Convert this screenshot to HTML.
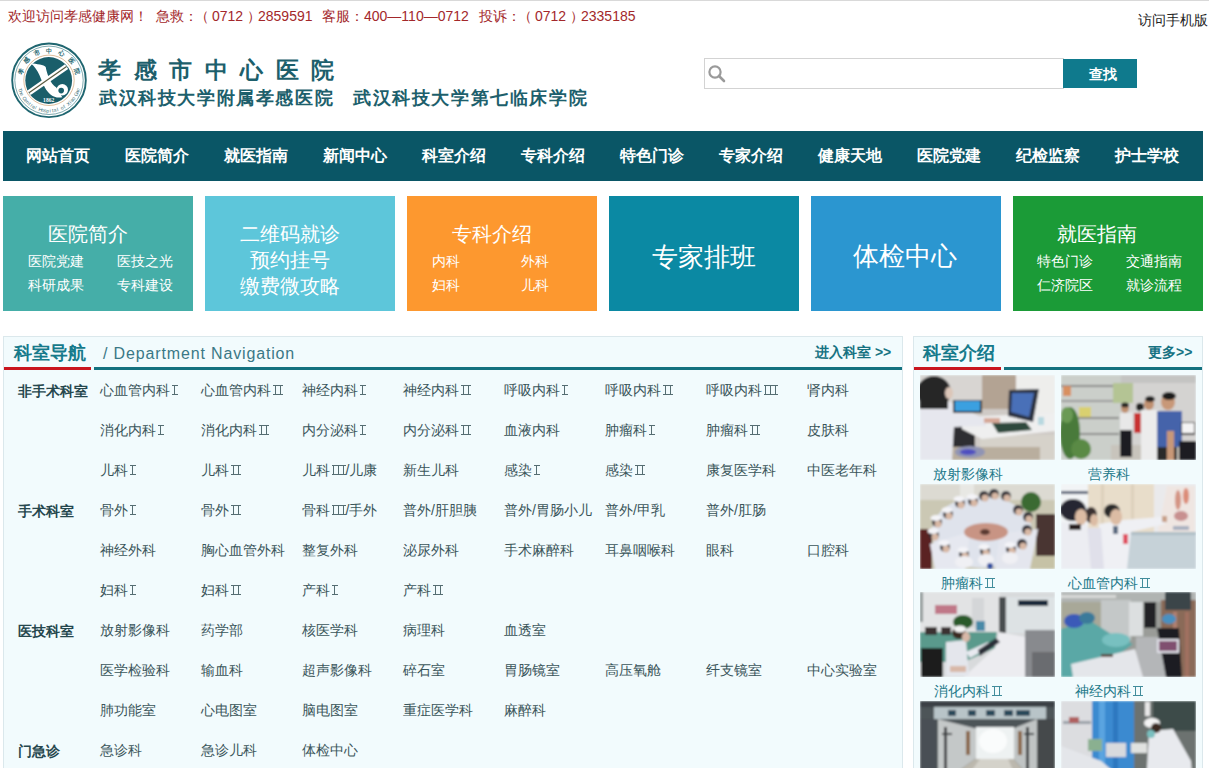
<!DOCTYPE html><html><head><meta charset="utf-8"><title>孝感市中心医院</title><style>
*{margin:0;padding:0;box-sizing:border-box}
html,body{width:1209px;height:768px;overflow:hidden;background:#fff}
body{font-family:"Liberation Sans",sans-serif;position:relative}
.a{position:absolute;white-space:nowrap}
#topline{left:0;top:0;width:1209px;height:1px;background:#d9d9d9}
.tt{top:9px;font-size:14px;line-height:14px;color:#a3282b}
#mobile{left:1138px;top:13px;font-size:14px;line-height:14px;color:#222}
#search{left:704px;top:58px;width:360px;height:31px;border:1px solid #d3d3d3;background:#fff}
#btn{left:1063px;top:59px;width:74px;height:29px;background:#0f7a8d}
#btnt{left:1089px;top:67px;font-size:14px;line-height:14px;font-weight:bold;color:#fff}
#nav{left:3px;top:131px;width:1200px;height:50px;background:#0a5666}
.ni{top:148px;font-size:16px;line-height:16px;font-weight:bold;color:#fff}
.tile{top:196px;width:190px;height:115px}
.tb{font-size:20px;line-height:20px;color:#fff}
.ts{font-size:14px;line-height:14px;color:#fff}
.tx{font-size:26px;line-height:26px;color:#fff}
#lp{left:3px;top:336px;width:900px;height:440px;background:#f2fbfd;border:1px solid #dbe8ec}
#rp{left:913px;top:336px;width:290px;height:440px;background:#f2fbfd;border:1px solid #dbe8ec}
.ph{font-size:18px;line-height:18px;font-weight:bold;color:#167a8b}
.red{height:3px;background:#c9151e}
.teal{height:3px;background:#13717f}
.more{font-size:14px;line-height:14px;font-weight:bold;color:#167282}
.cat{font-size:14px;line-height:14px;font-weight:bold;color:#26474e}
.it{font-size:14px;line-height:14px;color:#3a555a}
.lbl{font-size:14px;line-height:14px;color:#23798a}
.pic{overflow:hidden}
.r{display:inline-block;vertical-align:baseline;height:10px;border-top:1px solid currentColor;border-bottom:1px solid currentColor;margin-left:1.5px;opacity:.85;position:relative;top:0px}
</style></head><body>
<div class="a" id="topline"></div>
<div class="a tt" style="left:8px">欢迎访问孝感健康网！</div>
<div class="a tt" style="left:156px">急救：</div>
<div class="a tt" style="left:195px">（</div>
<div class="a tt" style="left:212px">0712</div>
<div class="a tt" style="left:247px">）</div>
<div class="a tt" style="left:258px">2859591</div>
<div class="a tt" style="left:322px">客服：</div>
<div class="a tt" style="left:364px">400—110—0712</div>
<div class="a tt" style="left:479px">投诉：</div>
<div class="a tt" style="left:518px">（</div>
<div class="a tt" style="left:535px">0712</div>
<div class="a tt" style="left:570px">）</div>
<div class="a tt" style="left:581px">2335185</div>
<div class="a" id="mobile">访问手机版</div>
<svg class="a" style="left:5px;top:38px" width="88" height="84" viewBox="0 0 88 84">
<circle cx="44" cy="42.3" r="36.8" fill="#fff" stroke="#1f6670" stroke-width="1.9"/>
<circle cx="44" cy="42.3" r="34.2" fill="none" stroke="#2a7078" stroke-width="0.6"/>
<text x="15.28" y="32.97" font-size="6.2" font-weight="bold" fill="#2a6a72" text-anchor="middle" dominant-baseline="central" transform="rotate(-72.0 15.28 32.97)">孝</text><text x="21.56" y="22.09" font-size="6.2" font-weight="bold" fill="#2a6a72" text-anchor="middle" dominant-baseline="central" transform="rotate(-48.0 21.56 22.09)">感</text><text x="31.72" y="14.71" font-size="6.2" font-weight="bold" fill="#2a6a72" text-anchor="middle" dominant-baseline="central" transform="rotate(-24.0 31.72 14.71)">市</text><text x="44.00" y="12.10" font-size="6.2" font-weight="bold" fill="#2a6a72" text-anchor="middle" dominant-baseline="central" transform="rotate(0.0 44.00 12.10)">中</text><text x="56.28" y="14.71" font-size="6.2" font-weight="bold" fill="#2a6a72" text-anchor="middle" dominant-baseline="central" transform="rotate(24.0 56.28 14.71)">心</text><text x="66.44" y="22.09" font-size="6.2" font-weight="bold" fill="#2a6a72" text-anchor="middle" dominant-baseline="central" transform="rotate(48.0 66.44 22.09)">医</text><text x="72.72" y="32.97" font-size="6.2" font-weight="bold" fill="#2a6a72" text-anchor="middle" dominant-baseline="central" transform="rotate(72.0 72.72 32.97)">院</text><text x="15.28" y="51.63" font-size="5" fill="#3a7078" text-anchor="middle" dominant-baseline="central" transform="rotate(72.0 15.28 51.63)">T</text><text x="16.13" y="53.93" font-size="5" fill="#3a7078" text-anchor="middle" dominant-baseline="central" transform="rotate(67.4 16.13 53.93)">h</text><text x="17.16" y="56.15" font-size="5" fill="#3a7078" text-anchor="middle" dominant-baseline="central" transform="rotate(62.7 17.16 56.15)">e</text><text x="19.75" y="60.30" font-size="5" fill="#3a7078" text-anchor="middle" dominant-baseline="central" transform="rotate(53.4 19.75 60.30)">C</text><text x="21.29" y="62.20" font-size="5" fill="#3a7078" text-anchor="middle" dominant-baseline="central" transform="rotate(48.8 21.29 62.20)">e</text><text x="22.97" y="63.98" font-size="5" fill="#3a7078" text-anchor="middle" dominant-baseline="central" transform="rotate(44.1 22.97 63.98)">n</text><text x="24.80" y="65.61" font-size="5" fill="#3a7078" text-anchor="middle" dominant-baseline="central" transform="rotate(39.5 24.80 65.61)">t</text><text x="26.75" y="67.09" font-size="5" fill="#3a7078" text-anchor="middle" dominant-baseline="central" transform="rotate(34.8 26.75 67.09)">r</text><text x="28.81" y="68.40" font-size="5" fill="#3a7078" text-anchor="middle" dominant-baseline="central" transform="rotate(30.2 28.81 68.40)">a</text><text x="30.98" y="69.55" font-size="5" fill="#3a7078" text-anchor="middle" dominant-baseline="central" transform="rotate(25.5 30.98 69.55)">l</text><text x="35.55" y="71.29" font-size="5" fill="#3a7078" text-anchor="middle" dominant-baseline="central" transform="rotate(16.3 35.55 71.29)">H</text><text x="37.92" y="71.88" font-size="5" fill="#3a7078" text-anchor="middle" dominant-baseline="central" transform="rotate(11.6 37.92 71.88)">o</text><text x="40.34" y="72.28" font-size="5" fill="#3a7078" text-anchor="middle" dominant-baseline="central" transform="rotate(7.0 40.34 72.28)">s</text><text x="42.78" y="72.48" font-size="5" fill="#3a7078" text-anchor="middle" dominant-baseline="central" transform="rotate(2.3 42.78 72.48)">p</text><text x="45.22" y="72.48" font-size="5" fill="#3a7078" text-anchor="middle" dominant-baseline="central" transform="rotate(-2.3 45.22 72.48)">i</text><text x="47.66" y="72.28" font-size="5" fill="#3a7078" text-anchor="middle" dominant-baseline="central" transform="rotate(-7.0 47.66 72.28)">t</text><text x="50.08" y="71.88" font-size="5" fill="#3a7078" text-anchor="middle" dominant-baseline="central" transform="rotate(-11.6 50.08 71.88)">a</text><text x="52.45" y="71.29" font-size="5" fill="#3a7078" text-anchor="middle" dominant-baseline="central" transform="rotate(-16.3 52.45 71.29)">l</text><text x="57.02" y="69.55" font-size="5" fill="#3a7078" text-anchor="middle" dominant-baseline="central" transform="rotate(-25.5 57.02 69.55)">o</text><text x="59.19" y="68.40" font-size="5" fill="#3a7078" text-anchor="middle" dominant-baseline="central" transform="rotate(-30.2 59.19 68.40)">f</text><text x="63.20" y="65.61" font-size="5" fill="#3a7078" text-anchor="middle" dominant-baseline="central" transform="rotate(-39.5 63.20 65.61)">X</text><text x="65.03" y="63.98" font-size="5" fill="#3a7078" text-anchor="middle" dominant-baseline="central" transform="rotate(-44.1 65.03 63.98)">i</text><text x="66.71" y="62.20" font-size="5" fill="#3a7078" text-anchor="middle" dominant-baseline="central" transform="rotate(-48.8 66.71 62.20)">a</text><text x="68.25" y="60.30" font-size="5" fill="#3a7078" text-anchor="middle" dominant-baseline="central" transform="rotate(-53.4 68.25 60.30)">o</text><text x="70.84" y="56.15" font-size="5" fill="#3a7078" text-anchor="middle" dominant-baseline="central" transform="rotate(-62.7 70.84 56.15)">G</text><text x="71.87" y="53.93" font-size="5" fill="#3a7078" text-anchor="middle" dominant-baseline="central" transform="rotate(-67.4 71.87 53.93)">a</text><text x="72.72" y="51.63" font-size="5" fill="#3a7078" text-anchor="middle" dominant-baseline="central" transform="rotate(-72.0 72.72 51.63)">n</text>
<circle cx="44" cy="42.3" r="25.2" fill="none" stroke="#d0a070" stroke-width="0.7"/>
<circle cx="43.7" cy="42.5" r="23.4" fill="#1a5e6a"/>
<path d="M25.6 25.3 C31.6 26.1 39.2 26.8 40.7 29.1 C42.2 36.7 45.2 45.7 51.3 49.5 L57.3 59.3 C49 60.8 43.7 56.3 39.9 49.5 C36.1 42.7 33.9 31.4 25.6 25.3 Z" fill="#fff"/>
<circle cx="57.3" cy="51.8" r="5.7" fill="#fff"/>
<circle cx="56.2" cy="52.6" r="2.8" fill="#1a5e6a"/>
<path d="M60 26.3 L22.4 52.5 L25.6 57.1 L63.2 30.9 Z" fill="#fff"/>
<path d="M61.6 28.6 L24 54.8" stroke="#5a5a40" stroke-width="1.2"/>
<text x="43.7" y="63.5" font-size="5.6" font-family="Liberation Serif" font-weight="bold" fill="#fff" text-anchor="middle">1862</text>
</svg>
<div class="a" style="left:98px;top:59px;font-size:23px;line-height:23px;font-weight:bold;color:#1d5f6c;letter-spacing:12.5px">孝感市中心医院</div>
<div class="a" style="left:99px;top:89px;font-size:18px;line-height:18px;font-weight:bold;color:#1d5f6c;letter-spacing:1.6px">武汉科技大学附属孝感医院</div>
<div class="a" style="left:353px;top:89px;font-size:18px;line-height:18px;font-weight:bold;color:#1d5f6c;letter-spacing:1.6px">武汉科技大学第七临床学院</div>
<div class="a" id="search"></div>
<svg class="a" style="left:706px;top:64px" width="22" height="20" viewBox="0 0 22 20"><circle cx="9" cy="8" r="5.6" fill="none" stroke="#9a9a9a" stroke-width="2.2"/><path d="M13 12 L18 17" stroke="#9a9a9a" stroke-width="2.6" stroke-linecap="round"/></svg>
<div class="a" id="btn"></div><div class="a" id="btnt">查找</div>
<div class="a" id="nav"></div>
<div class="a ni" style="left:26px">网站首页</div>
<div class="a ni" style="left:125px">医院简介</div>
<div class="a ni" style="left:224px">就医指南</div>
<div class="a ni" style="left:323px">新闻中心</div>
<div class="a ni" style="left:422px">科室介绍</div>
<div class="a ni" style="left:521px">专科介绍</div>
<div class="a ni" style="left:620px">特色门诊</div>
<div class="a ni" style="left:719px">专家介绍</div>
<div class="a ni" style="left:818px">健康天地</div>
<div class="a ni" style="left:917px">医院党建</div>
<div class="a ni" style="left:1016px">纪检监察</div>
<div class="a ni" style="left:1115px">护士学校</div>
<div class="a tile" style="left:3px;background:#45aea8"></div>
<div class="a tile" style="left:205px;background:#5dc6da"></div>
<div class="a tile" style="left:407px;background:#fd982f"></div>
<div class="a tile" style="left:609px;background:#0b89a3"></div>
<div class="a tile" style="left:811px;background:#2b96d0"></div>
<div class="a tile" style="left:1013px;background:#1b9b37"></div>
<div class="a tb" style="left:48px;top:224px">医院简介</div>
<div class="a ts" style="left:28px;top:254px">医院党建</div>
<div class="a ts" style="left:117px;top:254px">医技之光</div>
<div class="a ts" style="left:28px;top:278px">科研成果</div>
<div class="a ts" style="left:117px;top:278px">专科建设</div>
<div class="a tb" style="left:240px;top:224px">二维码就诊</div>
<div class="a tb" style="left:250px;top:250px">预约挂号</div>
<div class="a tb" style="left:240px;top:276px">缴费微攻略</div>
<div class="a tb" style="left:452px;top:224px">专科介绍</div>
<div class="a ts" style="left:432px;top:254px">内科</div>
<div class="a ts" style="left:521px;top:254px">外科</div>
<div class="a ts" style="left:432px;top:278px">妇科</div>
<div class="a ts" style="left:521px;top:278px">儿科</div>
<div class="a tx" style="left:652px;top:244px">专家排班</div>
<div class="a tx" style="left:853px;top:243px">体检中心</div>
<div class="a tb" style="left:1057px;top:224px">就医指南</div>
<div class="a ts" style="left:1037px;top:254px">特色门诊</div>
<div class="a ts" style="left:1126px;top:254px">交通指南</div>
<div class="a ts" style="left:1037px;top:278px">仁济院区</div>
<div class="a ts" style="left:1126px;top:278px">就诊流程</div>
<div class="a" id="lp"></div><div class="a" id="rp"></div>
<div class="a ph" style="left:14px;top:344px">科室导航</div>
<div class="a" style="left:103px;top:346px;font-size:16px;line-height:16px;color:#3a7886;letter-spacing:0.85px">/ Department Navigation</div>
<div class="a red" style="left:4px;top:367px;width:87px"></div><div class="a teal" style="left:94px;top:367px;width:808px"></div>
<div class="a more" style="left:815px;top:345px">进入科室 &gt;&gt;</div>
<div class="a ph" style="left:923px;top:344px">科室介绍</div>
<div class="a more" style="left:1148px;top:345px">更多&gt;&gt;</div>
<div class="a red" style="left:914px;top:367px;width:87px"></div><div class="a teal" style="left:1004px;top:367px;width:198px"></div>
<div class="a cat" style="left:18px;top:384px">非手术科室</div>
<div class="a it" style="left:100px;top:383px">心血管内科<span class="r" style="width:6px"><i style="position:absolute;top:0;bottom:0;left:2.50px;width:1px;background:currentColor"></i></span></div>
<div class="a it" style="left:201px;top:383px">心血管内科<span class="r" style="width:10px"><i style="position:absolute;top:0;bottom:0;left:2.00px;width:1px;background:currentColor"></i><i style="position:absolute;top:0;bottom:0;left:7.00px;width:1px;background:currentColor"></i></span></div>
<div class="a it" style="left:302px;top:383px">神经内科<span class="r" style="width:6px"><i style="position:absolute;top:0;bottom:0;left:2.50px;width:1px;background:currentColor"></i></span></div>
<div class="a it" style="left:403px;top:383px">神经内科<span class="r" style="width:10px"><i style="position:absolute;top:0;bottom:0;left:2.00px;width:1px;background:currentColor"></i><i style="position:absolute;top:0;bottom:0;left:7.00px;width:1px;background:currentColor"></i></span></div>
<div class="a it" style="left:504px;top:383px">呼吸内科<span class="r" style="width:6px"><i style="position:absolute;top:0;bottom:0;left:2.50px;width:1px;background:currentColor"></i></span></div>
<div class="a it" style="left:605px;top:383px">呼吸内科<span class="r" style="width:10px"><i style="position:absolute;top:0;bottom:0;left:2.00px;width:1px;background:currentColor"></i><i style="position:absolute;top:0;bottom:0;left:7.00px;width:1px;background:currentColor"></i></span></div>
<div class="a it" style="left:706px;top:383px">呼吸内科<span class="r" style="width:14px"><i style="position:absolute;top:0;bottom:0;left:1.83px;width:1px;background:currentColor"></i><i style="position:absolute;top:0;bottom:0;left:6.50px;width:1px;background:currentColor"></i><i style="position:absolute;top:0;bottom:0;left:11.17px;width:1px;background:currentColor"></i></span></div>
<div class="a it" style="left:807px;top:383px">肾内科</div>
<div class="a it" style="left:100px;top:423px">消化内科<span class="r" style="width:6px"><i style="position:absolute;top:0;bottom:0;left:2.50px;width:1px;background:currentColor"></i></span></div>
<div class="a it" style="left:201px;top:423px">消化内科<span class="r" style="width:10px"><i style="position:absolute;top:0;bottom:0;left:2.00px;width:1px;background:currentColor"></i><i style="position:absolute;top:0;bottom:0;left:7.00px;width:1px;background:currentColor"></i></span></div>
<div class="a it" style="left:302px;top:423px">内分泌科<span class="r" style="width:6px"><i style="position:absolute;top:0;bottom:0;left:2.50px;width:1px;background:currentColor"></i></span></div>
<div class="a it" style="left:403px;top:423px">内分泌科<span class="r" style="width:10px"><i style="position:absolute;top:0;bottom:0;left:2.00px;width:1px;background:currentColor"></i><i style="position:absolute;top:0;bottom:0;left:7.00px;width:1px;background:currentColor"></i></span></div>
<div class="a it" style="left:504px;top:423px">血液内科</div>
<div class="a it" style="left:605px;top:423px">肿瘤科<span class="r" style="width:6px"><i style="position:absolute;top:0;bottom:0;left:2.50px;width:1px;background:currentColor"></i></span></div>
<div class="a it" style="left:706px;top:423px">肿瘤科<span class="r" style="width:10px"><i style="position:absolute;top:0;bottom:0;left:2.00px;width:1px;background:currentColor"></i><i style="position:absolute;top:0;bottom:0;left:7.00px;width:1px;background:currentColor"></i></span></div>
<div class="a it" style="left:807px;top:423px">皮肤科</div>
<div class="a it" style="left:100px;top:463px">儿科<span class="r" style="width:6px"><i style="position:absolute;top:0;bottom:0;left:2.50px;width:1px;background:currentColor"></i></span></div>
<div class="a it" style="left:201px;top:463px">儿科<span class="r" style="width:10px"><i style="position:absolute;top:0;bottom:0;left:2.00px;width:1px;background:currentColor"></i><i style="position:absolute;top:0;bottom:0;left:7.00px;width:1px;background:currentColor"></i></span></div>
<div class="a it" style="left:302px;top:463px">儿科<span class="r" style="width:14px"><i style="position:absolute;top:0;bottom:0;left:1.83px;width:1px;background:currentColor"></i><i style="position:absolute;top:0;bottom:0;left:6.50px;width:1px;background:currentColor"></i><i style="position:absolute;top:0;bottom:0;left:11.17px;width:1px;background:currentColor"></i></span>/儿康</div>
<div class="a it" style="left:403px;top:463px">新生儿科</div>
<div class="a it" style="left:504px;top:463px">感染<span class="r" style="width:6px"><i style="position:absolute;top:0;bottom:0;left:2.50px;width:1px;background:currentColor"></i></span></div>
<div class="a it" style="left:605px;top:463px">感染<span class="r" style="width:10px"><i style="position:absolute;top:0;bottom:0;left:2.00px;width:1px;background:currentColor"></i><i style="position:absolute;top:0;bottom:0;left:7.00px;width:1px;background:currentColor"></i></span></div>
<div class="a it" style="left:706px;top:463px">康复医学科</div>
<div class="a it" style="left:807px;top:463px">中医老年科</div>
<div class="a cat" style="left:18px;top:504px">手术科室</div>
<div class="a it" style="left:100px;top:503px">骨外<span class="r" style="width:6px"><i style="position:absolute;top:0;bottom:0;left:2.50px;width:1px;background:currentColor"></i></span></div>
<div class="a it" style="left:201px;top:503px">骨外<span class="r" style="width:10px"><i style="position:absolute;top:0;bottom:0;left:2.00px;width:1px;background:currentColor"></i><i style="position:absolute;top:0;bottom:0;left:7.00px;width:1px;background:currentColor"></i></span></div>
<div class="a it" style="left:302px;top:503px">骨科<span class="r" style="width:14px"><i style="position:absolute;top:0;bottom:0;left:1.83px;width:1px;background:currentColor"></i><i style="position:absolute;top:0;bottom:0;left:6.50px;width:1px;background:currentColor"></i><i style="position:absolute;top:0;bottom:0;left:11.17px;width:1px;background:currentColor"></i></span>/手外</div>
<div class="a it" style="left:403px;top:503px">普外/肝胆胰</div>
<div class="a it" style="left:504px;top:503px">普外/胃肠小儿</div>
<div class="a it" style="left:605px;top:503px">普外/甲乳</div>
<div class="a it" style="left:706px;top:503px">普外/肛肠</div>
<div class="a it" style="left:100px;top:543px">神经外科</div>
<div class="a it" style="left:201px;top:543px">胸心血管外科</div>
<div class="a it" style="left:302px;top:543px">整复外科</div>
<div class="a it" style="left:403px;top:543px">泌尿外科</div>
<div class="a it" style="left:504px;top:543px">手术麻醉科</div>
<div class="a it" style="left:605px;top:543px">耳鼻咽喉科</div>
<div class="a it" style="left:706px;top:543px">眼科</div>
<div class="a it" style="left:807px;top:543px">口腔科</div>
<div class="a it" style="left:100px;top:583px">妇科<span class="r" style="width:6px"><i style="position:absolute;top:0;bottom:0;left:2.50px;width:1px;background:currentColor"></i></span></div>
<div class="a it" style="left:201px;top:583px">妇科<span class="r" style="width:10px"><i style="position:absolute;top:0;bottom:0;left:2.00px;width:1px;background:currentColor"></i><i style="position:absolute;top:0;bottom:0;left:7.00px;width:1px;background:currentColor"></i></span></div>
<div class="a it" style="left:302px;top:583px">产科<span class="r" style="width:6px"><i style="position:absolute;top:0;bottom:0;left:2.50px;width:1px;background:currentColor"></i></span></div>
<div class="a it" style="left:403px;top:583px">产科<span class="r" style="width:10px"><i style="position:absolute;top:0;bottom:0;left:2.00px;width:1px;background:currentColor"></i><i style="position:absolute;top:0;bottom:0;left:7.00px;width:1px;background:currentColor"></i></span></div>
<div class="a cat" style="left:18px;top:624px">医技科室</div>
<div class="a it" style="left:100px;top:623px">放射影像科</div>
<div class="a it" style="left:201px;top:623px">药学部</div>
<div class="a it" style="left:302px;top:623px">核医学科</div>
<div class="a it" style="left:403px;top:623px">病理科</div>
<div class="a it" style="left:504px;top:623px">血透室</div>
<div class="a it" style="left:100px;top:663px">医学检验科</div>
<div class="a it" style="left:201px;top:663px">输血科</div>
<div class="a it" style="left:302px;top:663px">超声影像科</div>
<div class="a it" style="left:403px;top:663px">碎石室</div>
<div class="a it" style="left:504px;top:663px">胃肠镜室</div>
<div class="a it" style="left:605px;top:663px">高压氧舱</div>
<div class="a it" style="left:706px;top:663px">纤支镜室</div>
<div class="a it" style="left:807px;top:663px">中心实验室</div>
<div class="a it" style="left:100px;top:703px">肺功能室</div>
<div class="a it" style="left:201px;top:703px">心电图室</div>
<div class="a it" style="left:302px;top:703px">脑电图室</div>
<div class="a it" style="left:403px;top:703px">重症医学科</div>
<div class="a it" style="left:504px;top:703px">麻醉科</div>
<div class="a cat" style="left:18px;top:744px">门急诊</div>
<div class="a it" style="left:100px;top:743px">急诊科</div>
<div class="a it" style="left:201px;top:743px">急诊儿科</div>
<div class="a it" style="left:302px;top:743px">体检中心</div>
<svg class="a" style="left:920px;top:375px" width="135" height="85" viewBox="0 0 135 85"><defs><filter id="fp1" x="0" y="0" width="135" height="85" filterUnits="userSpaceOnUse"><feGaussianBlur stdDeviation="0.8" edgeMode="duplicate"/></filter></defs><g filter="url(#fp1)">
<rect width="135" height="85" fill="#cfcac6"/>
<rect x="0" y="0" width="62" height="32" fill="#d8d5d2"/>
<rect x="62" y="0" width="34" height="34" fill="#b3a393"/>
<rect x="96" y="0" width="39" height="52" fill="#eeeeec"/>
<rect x="60" y="60" width="75" height="25" fill="#d6d2ca"/>
<rect x="29" y="50" width="26" height="24" fill="#2e2e30"/>
<rect x="30" y="72" width="90" height="13" fill="#b9ae9e"/>
<polygon points="42,42 135,38 135,56 62,64 42,54" fill="#efefef"/>
<ellipse cx="50" cy="77" rx="15" ry="6" fill="#9094b4"/>
<ellipse cx="48" cy="77" rx="8" ry="3" fill="#5050c0"/>
<path d="M0 28 L30 27 L50 37 L66 44 L66 51 L34 52 L32 85 L0 85 Z" fill="#e6e7ee"/>
<ellipse cx="14" cy="17" rx="17" ry="16" fill="#262628"/>
<rect x="0" y="10" width="28" height="24" fill="#262628"/>
<ellipse cx="29" cy="18" rx="4" ry="6" fill="#dcc6b8"/>
<rect x="33" y="25" width="29" height="13" fill="#2a2a2a"/>
<rect x="35" y="26" width="25" height="10" fill="#3aa0e0"/>
<polygon points="89,15 119,14 113,47 88,41" fill="#2b3040"/>
<polygon points="92,18 114,18 109,42 91,37" fill="#4a70b8"/>
<polygon points="72,48 106,47 112,55 78,58" fill="#2f4a3c"/>
<rect x="64" y="43" width="16" height="5" fill="#d6a898"/>
<rect x="118" y="42" width="6" height="8" fill="#b8d8e0"/>
</g></svg>
<svg class="a" style="left:1061px;top:375px" width="135" height="85" viewBox="0 0 135 85"><defs><filter id="fp2" x="0" y="0" width="135" height="85" filterUnits="userSpaceOnUse"><feGaussianBlur stdDeviation="0.8" edgeMode="duplicate"/></filter></defs><g filter="url(#fp2)">
<rect width="135" height="85" fill="#d4d3d1"/>
<rect x="0" y="0" width="135" height="8" fill="#c4c4c2"/>
<rect x="0" y="0" width="60" height="85" fill="#cbcfca"/>
<rect x="0" y="10" width="58" height="2" fill="#8a8a88"/>
<rect x="0" y="25" width="58" height="2" fill="#9a9a98"/>
<rect x="0" y="42" width="58" height="2" fill="#8a8a88"/>
<rect x="0" y="58" width="58" height="2" fill="#8a8a88"/>
<rect x="2" y="11" width="8" height="10" fill="#d89060"/>
<rect x="52" y="8" width="20" height="20" fill="#b4c494"/>
<rect x="18" y="32" width="12" height="10" fill="#d9d070"/>
<ellipse cx="9" cy="58" rx="10" ry="26" fill="#4a7a3a"/>
<ellipse cx="20" cy="74" rx="10" ry="10" fill="#5a8a45"/>
<ellipse cx="6" cy="40" rx="6" ry="8" fill="#6a9a55"/>
<rect x="50" y="70" width="70" height="15" fill="#c8c4bc"/>
<rect x="68" y="36" width="9" height="22" fill="#dcdcdc"/>
<rect x="59" y="38" width="12" height="18" fill="#e8e8e8"/>
<rect x="59" y="55" width="12" height="27" fill="#1e1e22"/>
<ellipse cx="64" cy="33" rx="4" ry="5" fill="#c09070"/>
<ellipse cx="64" cy="30" rx="4" ry="2.5" fill="#222"/>
<rect x="73" y="38" width="10" height="20" fill="#c83030"/>
<ellipse cx="79" cy="32" rx="4" ry="4" fill="#222"/>
<polygon points="80,35 98,35 100,85 80,85" fill="#ececec"/>
<ellipse cx="88" cy="29" rx="5" ry="6" fill="#c09070"/>
<ellipse cx="89" cy="24" rx="5" ry="3" fill="#222"/>
<polygon points="96,36 121,36 121,72 96,72" fill="#4464aa"/>
<rect x="96" y="72" width="20" height="13" fill="#2a2a2a"/>
<ellipse cx="107" cy="27" rx="7" ry="8" fill="#c89878"/>
<ellipse cx="108" cy="21" rx="7" ry="4" fill="#1e1e1e"/>
<rect x="106" y="56" width="7" height="29" fill="#c89878"/>
<rect x="120" y="47" width="14" height="13" fill="#222"/>
<rect x="121" y="48" width="12" height="10" fill="#f4f4f4"/>
<rect x="118" y="66" width="17" height="19" fill="#1e1e20"/>
</g></svg>
<div class="a lbl" style="left:908px;top:467px;width:120px;text-align:center">放射影像科</div>
<div class="a lbl" style="left:1049px;top:467px;width:120px;text-align:center">营养科</div>
<svg class="a" style="left:920px;top:484px" width="135" height="85" viewBox="0 0 135 85"><defs><filter id="fp3" x="0" y="0" width="135" height="85" filterUnits="userSpaceOnUse"><feGaussianBlur stdDeviation="0.8" edgeMode="duplicate"/></filter></defs><g filter="url(#fp3)">
<rect width="135" height="85" fill="#cbc8b4"/>
<rect x="0" y="0" width="135" height="16" fill="#dcdad2"/>
<rect x="40" y="0" width="14" height="16" fill="#e8e8e4"/>
<rect x="0" y="45" width="12" height="40" fill="#5a2424"/>
<rect x="116" y="30" width="19" height="42" fill="#4a3430"/>
<ellipse cx="111" cy="18" rx="10" ry="10" fill="#3a6a30"/>
<rect x="100" y="72" width="35" height="13" fill="#c6c2a6"/>
<ellipse cx="62" cy="48" rx="50" ry="36" fill="#dfe3ec"/>
<polygon points="10,60 50,48 45,85 15,85" fill="#e6e8f0"/>
<polygon points="80,50 118,45 110,85 75,85" fill="#e4e6ee"/>
<ellipse cx="66" cy="48" rx="22" ry="9" fill="#c89484"/>
<ellipse cx="65" cy="48" rx="5" ry="3" fill="#5a3a30"/>
<ellipse cx="40" cy="19" rx="5" ry="5" fill="#2c2c34"/><ellipse cx="41" cy="21" rx="3.5" ry="3.5" fill="#d8b8a4"/><ellipse cx="39" cy="15" rx="5.5" ry="3" fill="#f4f4f8"/><ellipse cx="53" cy="17" rx="5" ry="5" fill="#2c2c34"/><ellipse cx="54" cy="19" rx="3.5" ry="3.5" fill="#d8b8a4"/><ellipse cx="52" cy="13" rx="5.5" ry="3" fill="#f4f4f8"/><ellipse cx="64" cy="12" rx="5" ry="5" fill="#2c2c34"/><ellipse cx="65" cy="14" rx="3.5" ry="3.5" fill="#d8b8a4"/><ellipse cx="74" cy="10" rx="5" ry="5" fill="#2c2c34"/><ellipse cx="75" cy="12" rx="3.5" ry="3.5" fill="#d8b8a4"/><ellipse cx="86" cy="12" rx="5" ry="5" fill="#2c2c34"/><ellipse cx="87" cy="14" rx="3.5" ry="3.5" fill="#d8b8a4"/><ellipse cx="98" cy="26" rx="5" ry="5" fill="#2c2c34"/><ellipse cx="99" cy="28" rx="3.5" ry="3.5" fill="#d8b8a4"/><ellipse cx="108" cy="33" rx="5" ry="5" fill="#2c2c34"/><ellipse cx="109" cy="35" rx="3.5" ry="3.5" fill="#d8b8a4"/><ellipse cx="28" cy="30" rx="5" ry="5" fill="#2c2c34"/><ellipse cx="29" cy="32" rx="3.5" ry="3.5" fill="#d8b8a4"/><ellipse cx="27" cy="26" rx="5.5" ry="3" fill="#f4f4f8"/><ellipse cx="17" cy="38" rx="5" ry="5" fill="#2c2c34"/><ellipse cx="18" cy="40" rx="3.5" ry="3.5" fill="#d8b8a4"/><ellipse cx="16" cy="34" rx="5.5" ry="3" fill="#f4f4f8"/><ellipse cx="14" cy="51" rx="5" ry="5" fill="#2c2c34"/><ellipse cx="15" cy="53" rx="3.5" ry="3.5" fill="#d8b8a4"/><ellipse cx="13" cy="47" rx="5.5" ry="3" fill="#f4f4f8"/><ellipse cx="25" cy="63" rx="5" ry="5" fill="#2c2c34"/><ellipse cx="26" cy="65" rx="3.5" ry="3.5" fill="#d8b8a4"/><ellipse cx="24" cy="59" rx="5.5" ry="3" fill="#f4f4f8"/><ellipse cx="44" cy="70" rx="5" ry="5" fill="#2c2c34"/><ellipse cx="45" cy="72" rx="3.5" ry="3.5" fill="#d8b8a4"/><ellipse cx="43" cy="66" rx="5.5" ry="3" fill="#f4f4f8"/><ellipse cx="65" cy="67" rx="5" ry="5" fill="#2c2c34"/><ellipse cx="66" cy="69" rx="3.5" ry="3.5" fill="#d8b8a4"/><ellipse cx="64" cy="63" rx="5.5" ry="3" fill="#f4f4f8"/><ellipse cx="91" cy="65" rx="5" ry="5" fill="#2c2c34"/><ellipse cx="92" cy="67" rx="3.5" ry="3.5" fill="#d8b8a4"/><ellipse cx="90" cy="61" rx="5.5" ry="3" fill="#f4f4f8"/><ellipse cx="107" cy="46" rx="5" ry="5" fill="#2c2c34"/><ellipse cx="108" cy="48" rx="3.5" ry="3.5" fill="#d8b8a4"/><ellipse cx="102" cy="60" rx="5" ry="5" fill="#2c2c34"/><ellipse cx="103" cy="62" rx="3.5" ry="3.5" fill="#d8b8a4"/>
<ellipse cx="44" cy="78" rx="9" ry="6" fill="#f0f0f4"/>
<ellipse cx="66" cy="76" rx="8" ry="6" fill="#f0f0f4"/>
<ellipse cx="90" cy="74" rx="8" ry="6" fill="#f0f0f4"/>
<ellipse cx="70" cy="82" rx="3" ry="3" fill="#3050a0"/>
</g></svg>
<svg class="a" style="left:1061px;top:484px" width="135" height="85" viewBox="0 0 135 85"><defs><filter id="fp4" x="0" y="0" width="135" height="85" filterUnits="userSpaceOnUse"><feGaussianBlur stdDeviation="0.8" edgeMode="duplicate"/></filter></defs><g filter="url(#fp4)">
<rect width="135" height="85" fill="#e8e8ea"/>
<rect x="0" y="0" width="28" height="85" fill="#f2f4f6"/>
<rect x="0" y="7" width="27" height="3" fill="#5a6478"/>
<rect x="27" y="0" width="66" height="56" fill="#e8ddca"/>
<rect x="40" y="0" width="3" height="56" fill="#ddd0bc"/>
<rect x="70" y="0" width="3" height="56" fill="#ddd0bc"/>
<rect x="93" y="0" width="42" height="56" fill="#eaeaec"/>
<polygon points="106,2 134,2 134,58 96,52" fill="#efe6e2"/>
<ellipse cx="117" cy="16" rx="3" ry="10" fill="#d49484"/>
<ellipse cx="125" cy="12" rx="3" ry="8" fill="#dc8c78"/>
<ellipse cx="120" cy="32" rx="7" ry="5" fill="#c89090"/>
<rect x="112" y="42" width="16" height="4" fill="#a8b0c0"/>
<rect x="61" y="50" width="74" height="35" fill="#c6d2d8"/>
<rect x="61" y="48" width="74" height="3" fill="#aebec6"/>
<polygon points="38,40 62,36 100,33 104,40 70,48 66,85 38,85" fill="#eff0f4"/>
<ellipse cx="51" cy="27" rx="8" ry="7" fill="#2a2a2a"/>
<ellipse cx="55" cy="33" rx="6" ry="8" fill="#dcbca4"/>
<rect x="52" y="42" width="5" height="8" fill="#5a6a80"/>
<rect x="62" y="50" width="5" height="10" fill="#e05060"/>
<polygon points="20,44 40,44 43,85 20,85" fill="#e0e0ea"/>
<ellipse cx="30" cy="31" rx="6" ry="8" fill="#3a3030"/>
<ellipse cx="33" cy="36" rx="4" ry="6" fill="#dcbca4"/>
<polygon points="0,38 26,40 30,85 0,85" fill="#ecedf2"/>
<ellipse cx="12" cy="26" rx="13" ry="11" fill="#252530"/>
<ellipse cx="20" cy="33" rx="6" ry="8" fill="#dcbca4"/>
<rect x="8" y="40" width="12" height="6" fill="#2a2020"/>
<rect x="101" y="32" width="5" height="6" fill="#c8a088"/>
</g></svg>
<div class="a lbl" style="left:908px;top:576px;width:120px;text-align:center">肿瘤科<span class="r" style="width:10px"><i style="position:absolute;top:0;bottom:0;left:2.00px;width:1px;background:currentColor"></i><i style="position:absolute;top:0;bottom:0;left:7.00px;width:1px;background:currentColor"></i></span></div>
<div class="a lbl" style="left:1049px;top:576px;width:120px;text-align:center">心血管内科<span class="r" style="width:10px"><i style="position:absolute;top:0;bottom:0;left:2.00px;width:1px;background:currentColor"></i><i style="position:absolute;top:0;bottom:0;left:7.00px;width:1px;background:currentColor"></i></span></div>
<svg class="a" style="left:920px;top:592px" width="135" height="85" viewBox="0 0 135 85"><defs><filter id="fp5" x="0" y="0" width="135" height="85" filterUnits="userSpaceOnUse"><feGaussianBlur stdDeviation="0.8" edgeMode="duplicate"/></filter></defs><g filter="url(#fp5)">
<rect width="135" height="85" fill="#d8dadc"/>
<rect x="0" y="0" width="80" height="42" fill="#e2e3e4"/>
<rect x="0" y="0" width="3" height="30" fill="#909898"/>
<rect x="15" y="13" width="22" height="9" fill="#c07888"/>
<rect x="52" y="6" width="12" height="30" fill="#d4d6d8"/>
<rect x="79" y="5" width="7" height="36" fill="#4a4e50"/>
<rect x="86" y="5" width="49" height="36" fill="#dde2e4"/>
<rect x="98" y="8" width="30" height="6" fill="#1a2a3a"/>
<rect x="105" y="38" width="30" height="47" fill="#888a8e"/>
<rect x="112" y="60" width="23" height="25" fill="#6a6c70"/>
<ellipse cx="43" cy="30" rx="10" ry="7" fill="#2a5a2a"/>
<rect x="56" y="29" width="9" height="10" fill="#4a8aa8"/>
<polygon points="0,40 77,40 75,56 44,70 0,70" fill="#5a9a8c"/>
<rect x="5" y="35" width="12" height="8" fill="#3a3030"/>
<rect x="21" y="35" width="10" height="8" fill="#3a3030"/>
<polygon points="44,85 75,56 79,40 105,45 105,85" fill="#ececf0"/>
<rect x="1" y="56" width="22" height="29" fill="#1a1a1c"/>
<polygon points="26,50 46,48 49,84 26,84" fill="#e4e6ec"/>
<ellipse cx="39" cy="41" rx="7" ry="6" fill="#3a2a20"/>
<ellipse cx="40" cy="37" rx="6" ry="3.5" fill="#f4f4f4"/>
<ellipse cx="46" cy="45" rx="4" ry="5" fill="#d8b8a8"/>
<polygon points="46,60 68,50 72,54 50,66" fill="#e8eaf0"/>
<polygon points="58,58 76,46 80,50 60,64" fill="#2a2e38"/>
<rect x="30" y="74" width="16" height="6" fill="#d8b8a8"/>
</g></svg>
<svg class="a" style="left:1061px;top:592px" width="135" height="85" viewBox="0 0 135 85"><defs><filter id="fp6" x="0" y="0" width="135" height="85" filterUnits="userSpaceOnUse"><feGaussianBlur stdDeviation="0.8" edgeMode="duplicate"/></filter></defs><g filter="url(#fp6)">
<rect width="135" height="85" fill="#9a9c98"/>
<rect x="0" y="0" width="135" height="10" fill="#b0b4b2"/>
<rect x="0" y="3" width="55" height="3" fill="#d8dad8"/>
<rect x="0" y="10" width="62" height="40" fill="#a8a898"/>
<rect x="40" y="8" width="30" height="40" fill="#c4c8c8"/>
<rect x="100" y="8" width="35" height="77" fill="#8a6a58"/>
<rect x="112" y="20" width="4" height="65" fill="#b08070"/>
<rect x="124" y="20" width="4" height="65" fill="#a07060"/>
<rect x="104" y="0" width="26" height="18" fill="#3a4448"/>
<rect x="75" y="45" width="30" height="40" fill="#b4b6b8"/>
<rect x="83" y="10" width="12" height="26" fill="#202428"/>
<rect x="68" y="10" width="14" height="34" fill="#dcdfe0"/>
<polygon points="0,37 28,28 50,42 72,52 45,72 12,85 0,85" fill="#5aa8a6"/>
<ellipse cx="13" cy="29" rx="10" ry="7" fill="#3a5ab8"/>
<ellipse cx="26" cy="26" rx="8" ry="6" fill="#3a7a9a"/>
<ellipse cx="55" cy="48" rx="14" ry="7" fill="#78c0c0"/>
<polygon points="10,72 74,57 82,85 12,85" fill="#e4e6ea"/>
<rect x="40" y="62" width="12" height="3" fill="#5a4a40"/>
<polygon points="96,36 118,36 121,85 105,85" fill="#1a1e24"/>
<ellipse cx="108" cy="27" rx="7" ry="5" fill="#4a90c0"/>
<rect x="96" y="47" width="22" height="14" fill="#e0e0e8"/>
<rect x="98" y="49" width="18" height="10" fill="#805070"/>
</g></svg>
<div class="a lbl" style="left:908px;top:684px;width:120px;text-align:center">消化内科<span class="r" style="width:10px"><i style="position:absolute;top:0;bottom:0;left:2.00px;width:1px;background:currentColor"></i><i style="position:absolute;top:0;bottom:0;left:7.00px;width:1px;background:currentColor"></i></span></div>
<div class="a lbl" style="left:1049px;top:684px;width:120px;text-align:center">神经内科<span class="r" style="width:10px"><i style="position:absolute;top:0;bottom:0;left:2.00px;width:1px;background:currentColor"></i><i style="position:absolute;top:0;bottom:0;left:7.00px;width:1px;background:currentColor"></i></span></div>
<svg class="a" style="left:920px;top:701px" width="135" height="85" viewBox="0 0 135 85"><defs><filter id="fp7" x="0" y="0" width="135" height="85" filterUnits="userSpaceOnUse"><feGaussianBlur stdDeviation="0.8" edgeMode="duplicate"/></filter></defs><g filter="url(#fp7)">
<rect width="135" height="85" fill="#4e5458"/>
<rect x="0" y="0" width="135" height="6" fill="#3a4044"/>
<rect x="14" y="6" width="112" height="12" fill="#b8c4c8"/>
<rect x="28" y="9" width="8" height="6" fill="#2a4a5a"/>
<rect x="48" y="9" width="8" height="6" fill="#2a4a5a"/>
<rect x="66" y="9" width="9" height="6" fill="#2a4a5a"/>
<rect x="84" y="9" width="9" height="6" fill="#2a4a5a"/>
<rect x="96" y="9" width="14" height="6" fill="#2a4a5a"/>
<polygon points="18,18 58,28 58,56 18,85" fill="#c4c8c8"/>
<polygon points="117,18 92,28 92,56 117,85" fill="#c0c4c4"/>
<polygon points="18,85 58,56 92,56 117,85" fill="#bcb8ae"/>
<rect x="56" y="26" width="38" height="32" fill="#eef2f2"/>
<ellipse cx="73" cy="40" rx="14" ry="12" fill="#fafcfc"/>
<polygon points="40,85 60,58 88,58 100,85" fill="#d4d2ca"/>
<rect x="46" y="30" width="4" height="24" fill="#8a6848"/>
<rect x="98" y="30" width="4" height="24" fill="#8a6848"/>
<rect x="0" y="18" width="16" height="67" fill="#4a5054"/>
<rect x="117" y="18" width="18" height="67" fill="#44494c"/>
<rect x="24" y="26" width="3" height="59" fill="#3a3e40"/>
<rect x="22" y="32" width="10" height="2" fill="#3a3e40"/>
<rect x="106" y="26" width="3" height="59" fill="#3a3e40"/>
<rect x="104" y="32" width="10" height="2" fill="#3a3e40"/>
</g></svg>
<svg class="a" style="left:1061px;top:701px" width="135" height="85" viewBox="0 0 135 85"><defs><filter id="fp8" x="0" y="0" width="135" height="85" filterUnits="userSpaceOnUse"><feGaussianBlur stdDeviation="0.8" edgeMode="duplicate"/></filter></defs><g filter="url(#fp8)">
<rect width="135" height="85" fill="#c8cccc"/>
<rect x="0" y="0" width="33" height="60" fill="#dcdde0"/>
<rect x="2" y="20" width="28" height="3" fill="#9aa0a8"/>
<rect x="8" y="16" width="10" height="6" fill="#b06060"/>
<rect x="73" y="0" width="62" height="85" fill="#6c7270"/>
<rect x="92" y="0" width="43" height="30" fill="#3e4c4a"/>
<rect x="31" y="0" width="42" height="72" fill="#3a8ad0"/>
<rect x="38" y="0" width="6" height="72" fill="#5aa4e0"/>
<rect x="52" y="0" width="5" height="72" fill="#2e78c0"/>
<rect x="84" y="1" width="5" height="14" fill="#e8e8e8"/>
<polygon points="0,45 40,60 70,85 0,85" fill="#e4e6ea"/>
<rect x="27" y="38" width="14" height="12" fill="#8ab090"/>
<rect x="45" y="42" width="20" height="14" fill="#d8dade"/>
<rect x="70" y="42" width="16" height="10" fill="#e0e2e0"/>
<polygon points="88,30 112,28 130,60 132,85 85,85" fill="#e8eaee"/>
<ellipse cx="91" cy="22" rx="8" ry="5" fill="#f4f4f4"/>
<ellipse cx="95" cy="27" rx="5" ry="5" fill="#3a2a20"/>
<ellipse cx="90" cy="33" rx="4" ry="4" fill="#7ac0c0"/>
</g></svg>
</body></html>
